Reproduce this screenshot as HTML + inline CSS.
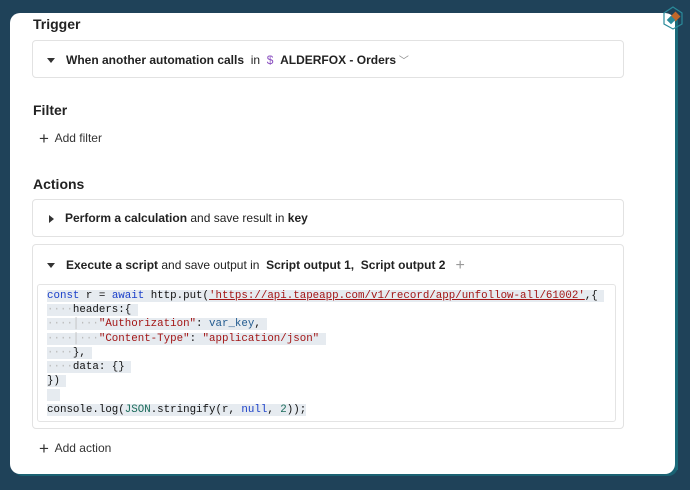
<!DOCTYPE html>
<html><head><style>
body{margin:0;width:690px;height:490px;background:#1f4259;overflow:hidden;font-family:"Liberation Sans",sans-serif;color:#222;position:relative}
.card{position:absolute;left:10px;top:13px;width:665px;height:461px;background:#fff;border-radius:10px;box-shadow:3px 2px 0 #1a6273}
.stripe{position:absolute;left:675px;top:20px;width:3px;height:450px;background:#1a6a7a}
h2{position:absolute;margin:0;font-size:14px;font-weight:bold;color:#222;left:23px}
.box{position:absolute;left:22px;width:590px;border:1px solid #e2e2e2;border-radius:4px;background:#fff}
.row{position:absolute;left:14px;font-size:12px;white-space:nowrap}
.tri{display:inline-block;width:0;height:0;margin-right:11px;vertical-align:middle}
.down{border-left:4px solid transparent;border-right:4px solid transparent;border-top:5px solid #333}
.right{border-top:4px solid transparent;border-bottom:4px solid transparent;border-left:5px solid #333;margin-left:2px}
b{font-weight:bold}
.add{position:absolute;left:29px;font-size:12px;color:#333}
.add span{font-size:17px;font-weight:300;vertical-align:-2px;margin-right:3px}
.code{position:absolute;left:4px;top:39px;width:577px;height:136px;border:1px solid #e4e4e4;border-radius:3px}
pre{margin:0;position:absolute;left:9px;top:4px;font-family:"Liberation Mono",monospace;font-size:10.8px;line-height:14.2px;color:#111}
.h{background:#e6ebf0}
.k{color:#1a3fc9}.s{color:#a31515}.v{color:#215a8f}.n{color:#1a6b5a}.d{color:#bbb}
.u{text-decoration:underline;text-decoration-color:#a31515}
</style></head><body>
<div class="card">
<h2 style="top:3px">Trigger</h2>
<div class="box" style="top:27px;height:36px"><div class="row" style="top:11px"><span class="tri down"></span><b>When another automation calls</b>&nbsp; in &nbsp;<span style="color:#8a4fc0">$</span>&nbsp; <b>ALDERFOX - Orders</b><span style="color:#888;font-size:10px"> ﹀</span></div></div>
<h2 style="top:89px">Filter</h2>
<div class="add" style="top:116px"><span>+</span> Add filter</div>
<h2 style="top:163px">Actions</h2>
<div class="box" style="top:186px;height:36px"><div class="row" style="top:11px"><span class="tri right"></span><b>Perform a calculation</b> and save result in <b>key</b></div></div>
<div class="box" style="top:231px;height:183px"><div class="row" style="top:12px"><span class="tri down"></span><b>Execute a script</b> and save output in &nbsp;<b>Script output 1,</b>&nbsp; <b>Script output 2</b>&nbsp;&nbsp; <span style="color:#999;font-size:16px;vertical-align:-1px">+</span></div>
<div class="code"><pre><span class="h"><span class="k">const</span> r = <span class="k">await</span> http.put(<span class="s u">'https://api.tapeapp.com/v1/record/app/unfollow-all/61002'</span>,{ </span>
<span class="h"><span class="d">····</span>headers:{ </span>
<span class="h"><span class="d">····│···</span><span class="s">"Authorization"</span>: <span class="v">var_key</span>, </span>
<span class="h"><span class="d">····│···</span><span class="s">"Content-Type"</span>: <span class="s">"application/json"</span> </span>
<span class="h"><span class="d">····</span>}, </span>
<span class="h"><span class="d">····</span>data: {} </span>
<span class="h">}) </span>
<span class="h">  </span>
<span class="h">console.log(<span class="n">JSON</span>.stringify(r, <span class="k">null</span>, <span class="n">2</span>));</span></pre></div></div>
<div class="add" style="top:426px"><span>+</span> Add action</div>
</div>
<div class="stripe"></div>
<svg style="position:absolute;left:660px;top:5px" width="26" height="26" viewBox="0 0 26 26"><polygon points="13,2 22,8 22,19 13,24 4,19 4,8" fill="none" stroke="#2a8a9a" stroke-width="1.2"/><rect x="12" y="8" width="7" height="7" transform="rotate(45 15.5 11.5)" fill="#c0672a"/><rect x="8" y="12" width="6" height="6" transform="rotate(45 11 15)" fill="#2a8a9a"/></svg>
</body></html>
